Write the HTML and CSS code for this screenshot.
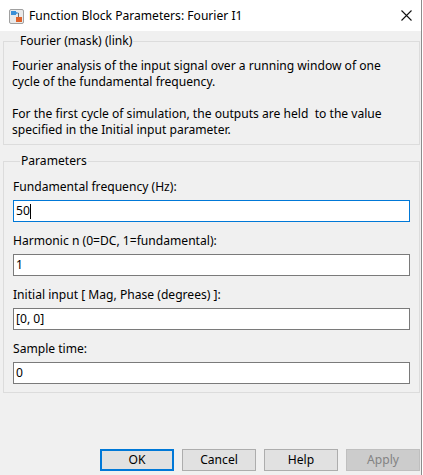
FILE: index.html
```html
<!DOCTYPE html>
<html>
<head>
<meta charset="utf-8">
<link rel="stylesheet" href="styles.css">
</head>
<body>
<div class="window">
  <div class="titlebar">
    <svg class="app-icon" width="15" height="15" viewBox="0 0 15 15">
      <rect x="0.5" y="0.5" width="14" height="14" rx="1.5" fill="#e9e9e9" stroke="#a0a0a0"/>
      <rect x="2" y="2" width="5" height="4" fill="#3a8fd6"/>
      <path d="M7 3 L10 4 L7 5 Z" fill="#3a8fd6"/>
      <path d="M9.5 4 L9.5 8" stroke="#6a6a6a" stroke-width="1"/>
      <rect x="7" y="8" width="6" height="5" fill="#e0622a"/>
    </svg>
    <span class="title">Function Block Parameters: Fourier I1</span>
    <svg class="close" width="11" height="11" viewBox="0 0 11 11">
      <path d="M0.5 0.5 L10.5 10.5 M10.5 0.5 L0.5 10.5" stroke="#111" stroke-width="1.1"/>
    </svg>
  </div>
  <div class="content">
    <fieldset class="group desc">
      <legend>Fourier (mask) (link)</legend>
      <p>Fourier analysis of the input signal over a running window of one<br>cycle of the fundamental frequency.</p>
      <p>For the first cycle of simulation, the outputs are held&nbsp; to the value<br>specified in the Initial input parameter.</p>
    </fieldset>
    <fieldset class="group params">
      <legend>Parameters</legend>
      <div class="label">Fundamental frequency (Hz):</div>
      <div class="field focused"><span>50</span><span class="caret"></span></div>
      <div class="label">Harmonic n (0=DC, 1=fundamental):</div>
      <div class="field"><span>1</span></div>
      <div class="label">Initial input [ Mag, Phase (degrees) ]:</div>
      <div class="field"><span>[0, 0]</span></div>
      <div class="label">Sample time:</div>
      <div class="field"><span>0</span></div>
    </fieldset>
    <div class="buttons">
      <div class="btn default">OK</div>
      <div class="btn">Cancel</div>
      <div class="btn">Help</div>
      <div class="btn disabled">Apply</div>
    </div>
  </div>
</div>
</body>
</html>
```
FILE: styles.css
```css
html, body {
  margin: 0;
  padding: 0;
  background: #ffffff;
}
body {
  width: 423px;
  height: 475px;
  overflow: hidden;
  font-family: "Noto Sans", "Segoe UI", sans-serif;
  font-size: 12.1px;
  color: #000;
}
.window {
  width: 421px;
  height: 475px;
  border-right: 1px solid #8c8c8c;
  display: flex;
  flex-direction: column;
  background: #f0f0f0;
}
.titlebar {
  height: 31px;
  flex: none;
  background: #ffffff;
  display: flex;
  align-items: center;
  padding: 0 0 0 9px;
}
.app-icon {
  flex: none;
  margin-right: 5px;
  margin-top: 1px;
}
.title {
  flex: 1;
  line-height: 16px;
  color: #000;
}
.close {
  flex: none;
  margin-right: 9px;
  margin-top: -1px;
}
.content {
  flex: 1;
  display: flex;
  flex-direction: column;
  padding: 2px 1px 4px 3px;
}
.group {
  margin: 0;
  border: 1px solid #dcdcdc;
  padding: 0;
  min-width: 0;
}
.group legend {
  padding: 0 1px;
  margin-left: 7px;
  line-height: 16px;
}
.desc {
  padding: 9px 8px 6px 8px;
}
.desc p {
  margin: 0;
  line-height: 16px;
}
.desc p + p {
  margin-top: 16px;
}
.params {
  margin-top: 8px;
  padding: 10px 9px 8px 9px;
}
.label {
  line-height: 16px;
  margin-bottom: 5px;
}
.field {
  height: 20px;
  border: 1px solid #7a7a7a;
  background: #fff;
  display: flex;
  align-items: center;
  padding-left: 2px;
  margin-bottom: 11px;
  line-height: 16px;
}
.field:last-child {
  margin-bottom: 0;
}
.field.focused {
  border-color: #0078d7;
}
.caret {
  width: 1px;
  height: 15px;
  background: #000;
}
.buttons {
  margin-top: auto;
  display: flex;
  justify-content: flex-end;
  gap: 8px;
}
.btn {
  width: 72px;
  height: 20px;
  border: 1px solid #adadad;
  background: #e1e1e1;
  display: flex;
  align-items: center;
  justify-content: center;
  line-height: 16px;
}
.btn.default {
  border: 2px solid #0078d7;
  width: 70px;
  height: 18px;
}
.btn.disabled {
  border-color: #bfbfbf;
  background: #cccccc;
  color: #838383;
}
```
